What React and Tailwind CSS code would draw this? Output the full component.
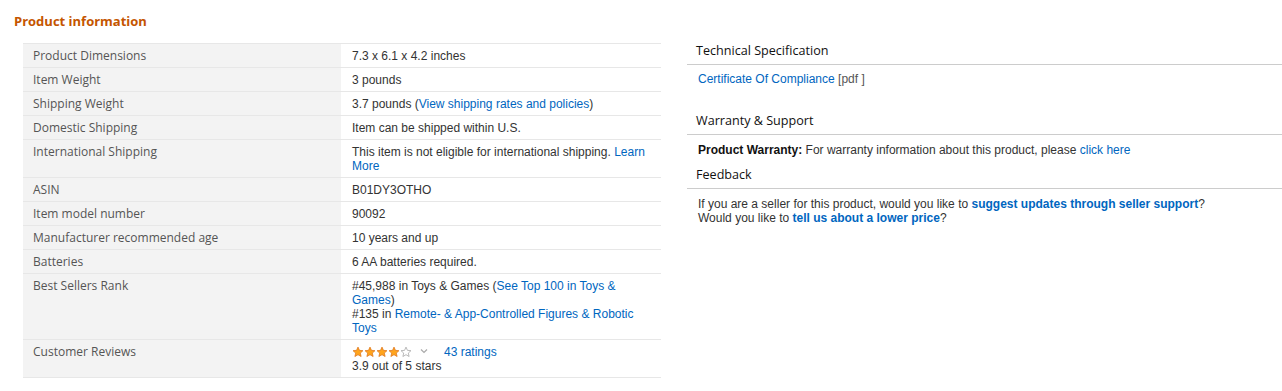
const label = "font-['Open_Sans',sans-serif] text-[12px] text-[#555]";
const value = "font-['Liberation_Sans',Arial,sans-serif] text-[12px] text-[#333]";
const link = "text-[#0066c0]";

function Star({ fill }) {
  // fill: 1 full, 0 empty
  return (
    <svg width="12" height="12" viewBox="0 0 24 24" className="shrink-0">
      <path
        d="M12 2.2l2.9 6.5 7 .7-5.3 4.7 1.6 6.9L12 17.4 5.8 21l1.6-6.9L2.1 9.4l7-.7z"
        fill={fill ? "#ffa41c" : "#fff"}
        stroke={fill ? "#de7921" : "#a8a8a8"}
        strokeWidth="1.6"
        strokeLinejoin="round"
      />
    </svg>
  );
}

function Row({ name, children }) {
  return (
    <tr className="border-t border-[#e7e7e7]">
      <th className={`${label} bg-[#f3f3f3] w-[318px] text-left font-normal align-top pl-[10px] pt-[5px] pb-[4px] leading-[14px]`}>
        {name}
      </th>
      <td className={`${value} align-top pl-[11px] pr-[12px] pt-[5px] pb-[4px] leading-[14px]`}>{children}</td>
    </tr>
  );
}

function Section({ title, body = "pt-[7px]", children }) {
  return (
    <div>
      <h3 className="font-['Open_Sans',sans-serif] text-[12.6px] text-[#111] leading-[19px] pl-[9px] pb-[4px] border-b border-[#ccc]">
        {title}
      </h3>
      <div className={`pl-[11px] ${body} font-['Liberation_Sans',Arial,sans-serif] text-[12px] leading-[14px] text-[#333]`}>
        {children}
      </div>
    </div>
  );
}

export default function App() {
  return (
    <div className="bg-white w-[1282px] h-[391px] overflow-hidden pl-[14px] pt-[12px]">
      <h2 className="font-['Open_Sans',sans-serif] font-bold text-[13px] leading-[19px] text-[#c45500]">
        Product information
      </h2>
      <div className="flex mt-[12px]">
        <table className="ml-[9px] w-[638px] border-collapse border-b border-[#e7e7e7] self-start">
          <tbody>
            <Row name="Product Dimensions">7.3 x 6.1 x 4.2 inches</Row>
            <Row name="Item Weight">3 pounds</Row>
            <Row name="Shipping Weight">
              3.7 pounds (<span className={link}>View shipping rates and policies</span>)
            </Row>
            <Row name="Domestic Shipping">Item can be shipped within U.S.</Row>
            <Row name="International Shipping">
              This item is not eligible for international shipping. <span className={link}>Learn More</span>
            </Row>
            <Row name="ASIN">B01DY3OTHO</Row>
            <Row name="Item model number">90092</Row>
            <Row name="Manufacturer recommended age">10 years and up</Row>
            <Row name="Batteries">6 AA batteries required.</Row>
            <Row name="Best Sellers Rank">
              <div>
                #45,988 in Toys &amp; Games (<span className={link}>See Top 100 in Toys &amp; Games</span>)
              </div>
              <div>
                #135 in <span className={link}>Remote- &amp; App-Controlled Figures &amp; Robotic Toys</span>
              </div>
            </Row>
            <Row name="Customer Reviews">
              <div className="flex items-center h-[14px]">
                <div className="flex">
                  <Star fill={1} />
                  <Star fill={1} />
                  <Star fill={1} />
                  <Star fill={1} />
                  <Star fill={0} />
                </div>
                <svg width="8" height="6" viewBox="0 0 8 6" className="ml-[8px] mb-[3px]">
                  <path d="M1 1.5l3 3 3-3" fill="none" stroke="#aaa" strokeWidth="1.2" />
                </svg>
                <span className={`${link} ml-[16px]`}>43 ratings</span>
              </div>
              <div>3.9 out of 5 stars</div>
            </Row>
          </tbody>
        </table>

        <div className="ml-[26px] flex-1 -mt-[2px] flex flex-col">
          <Section title="Technical Specification">
            <span className={link}>Certificate Of Compliance</span>{" "}
            <span className="text-[#555]">[pdf ]</span>
          </Section>
          <div className="mt-[25px]">
            <Section title="Warranty &amp; Support" body="pt-[8px]">
              <span className="font-bold text-[#111]">Product Warranty:</span> For warranty information about this
              product, please <span className={link}>click here</span>
            </Section>
          </div>
          <div className="mt-[8px]">
            <Section title="Feedback" body="pt-[8px]">
              <div>
                If you are a seller for this product, would you like to{" "}
                <span className={`${link} font-bold`}>suggest updates through seller support</span>?
              </div>
              <div>
                Would you like to <span className={`${link} font-bold`}>tell us about a lower price</span>?
              </div>
            </Section>
          </div>
        </div>
      </div>
    </div>
  );
}
